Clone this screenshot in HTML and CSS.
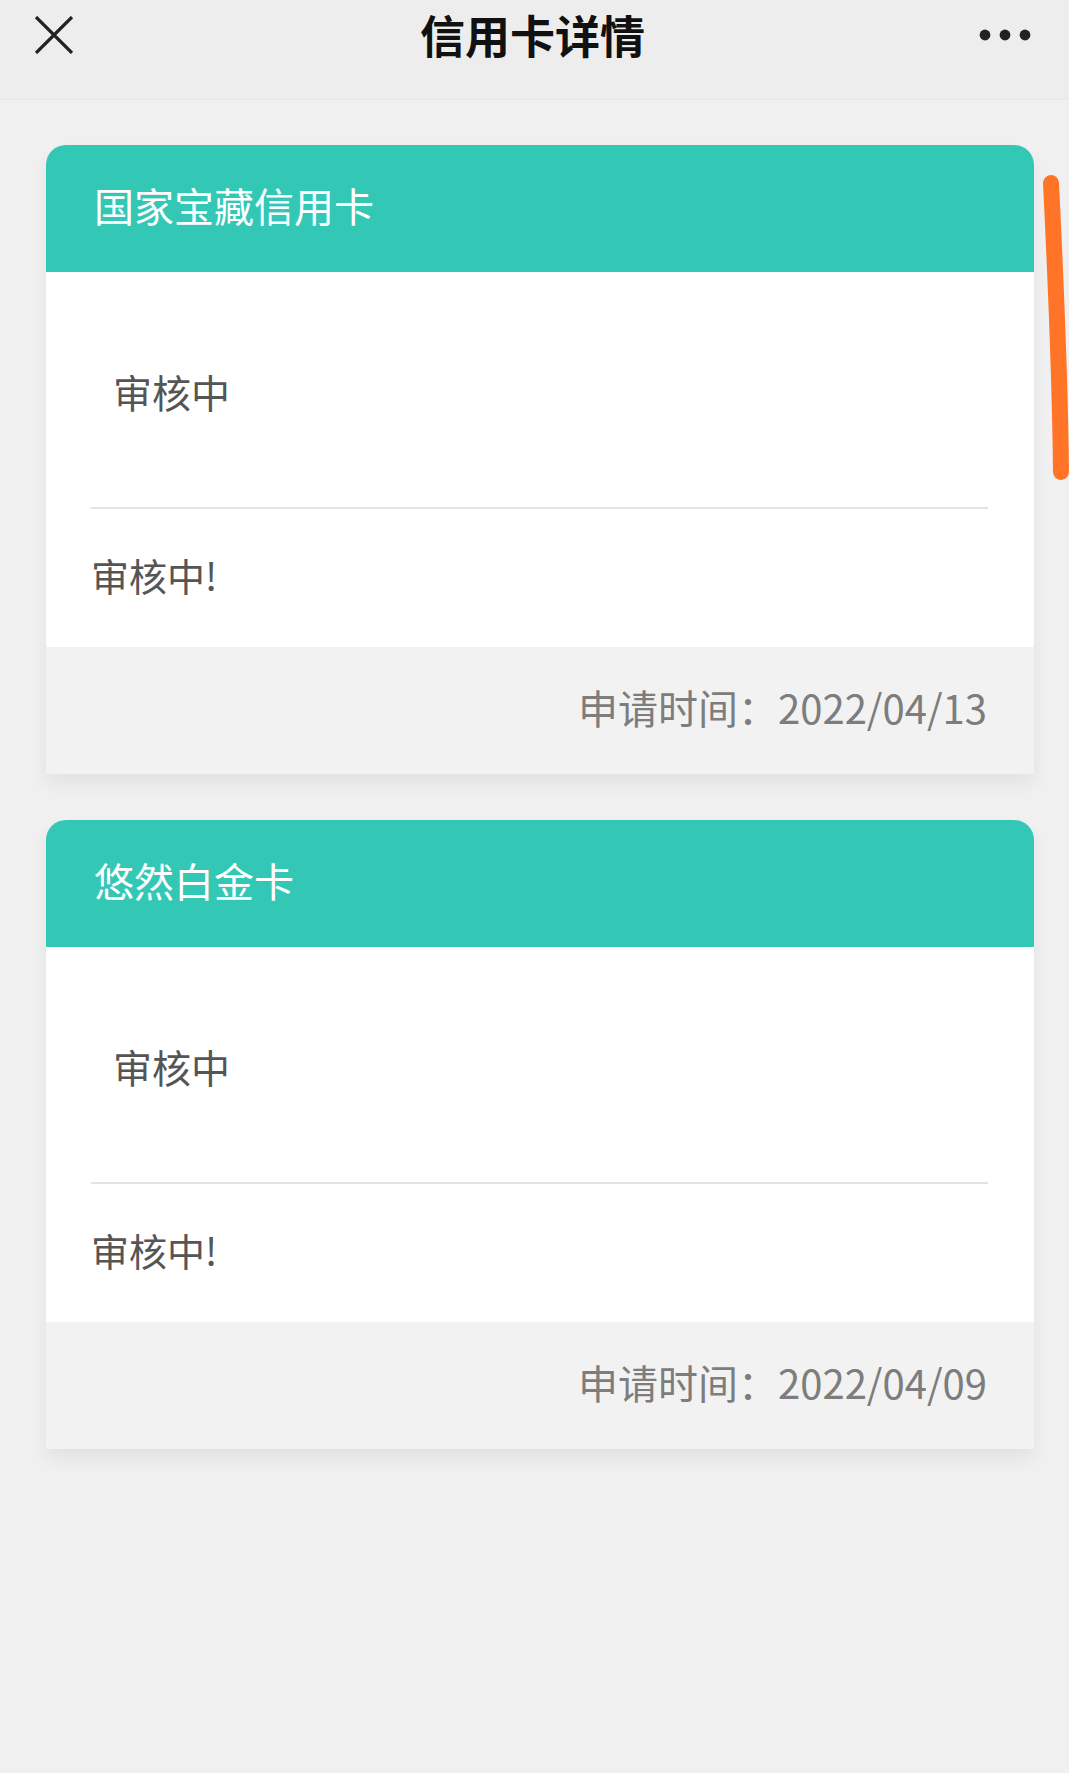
FILE: index.html
```html
<!DOCTYPE html>
<html lang="zh-CN">
<head>
    <meta charset="UTF-8">
    <meta name="viewport" content="width=device-width, initial-scale=1.0">
    <title>信用卡详情</title>
    <link rel="stylesheet" href="styles.css">
</head>
<body>
    <header class="topbar">
        <button class="icon-btn close" aria-label="关闭">
            <svg width="40" height="38" viewBox="0 0 40 38">
                <path d="M2 1 L38 37 M38 1 L2 37" stroke="#222" stroke-width="3.2" fill="none"/>
            </svg>
        </button>
        <h1>信用卡详情</h1>
        <button class="icon-btn more" aria-label="更多">
            <svg width="52" height="14" viewBox="0 0 52 14">
                <circle cx="6" cy="7" r="5.4" fill="#222"/>
                <circle cx="26" cy="7" r="5.4" fill="#222"/>
                <circle cx="46" cy="7" r="5.4" fill="#222"/>
            </svg>
        </button>
    </header>

    <main class="list">
        <section class="card">
            <div class="card-head">国家宝藏信用卡</div>
            <div class="card-body">
                <div class="status">审核中</div>
                <div class="message">审核中!</div>
            </div>
            <div class="card-foot">申请时间：2022/04/13</div>
        </section>

        <section class="card">
            <div class="card-head">悠然白金卡</div>
            <div class="card-body">
                <div class="status">审核中</div>
                <div class="message">审核中!</div>
            </div>
            <div class="card-foot">申请时间：2022/04/09</div>
        </section>
    </main>

    <!-- scroll mark drawn over the first card -->
    <svg class="scroll-mark" width="28" height="312" viewBox="0 0 28 312">
        <path d="M8 9 C 12 90, 17 200, 18 298" stroke="#ff7426" stroke-width="16" stroke-linecap="round" fill="none"/>
    </svg>
</body>
</html>
```

FILE: styles.css
```css
body {
    margin: 0;
    padding: 0;
    background-color: #f0f0f0;
    font-family: "Noto Sans CJK SC", "Noto Sans", sans-serif;
    position: relative;
    min-height: 1773px;
}
.topbar {
    height: 99px;
    display: grid;
    grid-template-columns: 1fr auto 1fr;
    align-items: center;
    background-color: #ededed;
    border-bottom: 1px solid #e7e7e7;
    padding: 0 38px 0 34px;
}
.topbar h1 {
    margin: 0;
    font-size: 45px;
    line-height: 1;
    font-weight: 700;
    color: #111;
    padding-bottom: 30px;
}
.icon-btn {
    border: none;
    background: none;
    padding: 0;
    display: flex;
    cursor: pointer;
}
.close {
    justify-self: start;
    margin-bottom: 30px;
}
.more {
    justify-self: end;
    margin-bottom: 30px;
}
.list {
    display: flex;
    flex-direction: column;
    gap: 46px;
    padding: 45px 35px 0 46px;
}
.card {
    border-radius: 20px 20px 0 0;
    overflow: hidden;
    box-shadow: 0 10px 18px rgba(0, 0, 0, 0.06);
}
.card-head {
    height: 127px;
    display: flex;
    align-items: center;
    padding-left: 48px;
    padding-bottom: 8px;
    box-sizing: border-box;
    background-color: #33c8b5;
    color: #fff;
    font-size: 40px;
}
.card-body {
    background-color: #fff;
    padding: 0 46px 0 45px;
}
.status {
    height: 237px;
    display: flex;
    align-items: center;
    padding-left: 22px;
    padding-top: 2px;
    font-size: 39px;
    color: #555;
    border-bottom: 2px solid #e3e3e3;
    box-sizing: border-box;
}
.message {
    height: 138px;
    display: flex;
    align-items: center;
    padding-bottom: 8px;
    box-sizing: border-box;
    font-size: 38px;
    color: #555;
}
.card-foot {
    height: 127px;
    display: flex;
    align-items: center;
    justify-content: flex-end;
    padding-right: 47px;
    padding-bottom: 7px;
    box-sizing: border-box;
    background-color: #f2f2f2;
    font-size: 40px;
    color: #7d7d7d;
}
.scroll-mark {
    position: absolute;
    left: 1043px;
    top: 174px;
}
```
